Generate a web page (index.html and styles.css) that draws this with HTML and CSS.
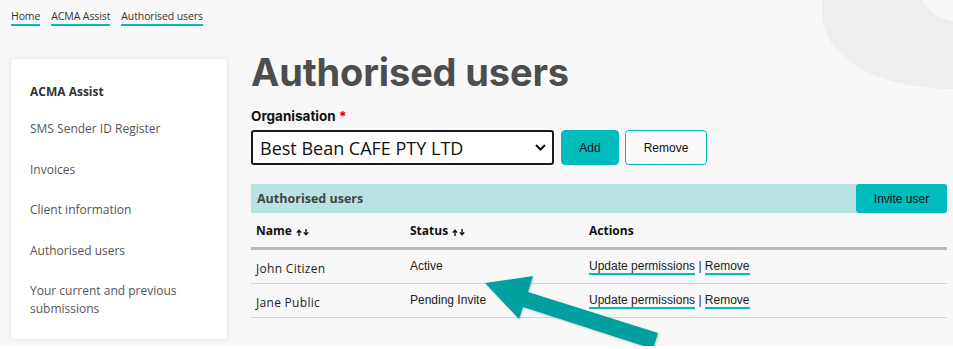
FILE: index.html
```html
<!DOCTYPE html>
<html lang="en">
<head>
<meta charset="utf-8">
<title>Authorised users</title>
<link rel="stylesheet" href="styles.css">
</head>
<body>
<div class="page">
  <svg class="deco" width="131" height="90" viewBox="822 0 131 90" aria-hidden="true">
    <path d="M822,0 L822,12 C822,58 878,89 953,89 L953,0 Z" fill="#eeeeee"/>
    <path d="M922,0 C929,12 940,19 953,21 L953,0 Z" fill="#f8f8f8"/>
  </svg>

  <nav class="crumbs">
    <a href="#">Home</a>
    <a href="#">ACMA Assist</a>
    <a href="#">Authorised users</a>
  </nav>

  <div class="layout">
    <aside class="side">
      <a class="side-title" href="#">ACMA Assist</a>
      <a href="#">SMS Sender ID Register</a>
      <a href="#">Invoices</a>
      <a href="#">Client information</a>
      <a href="#">Authorised users</a>
      <a href="#">Your current and previous submissions</a>
    </aside>

    <main class="main">
      <h1>Authorised users</h1>
      <label class="label">Organisation <span class="req">*</span></label>
      <div class="org-row">
        <div class="select">
          <span>Best Bean CAFE PTY LTD</span>
          <svg width="11" height="7" viewBox="0 0 11 7"><path d="M1 1l4.5 4.5L10 1" fill="none" stroke="#111" stroke-width="2"/></svg>
        </div>
        <button class="btn btn-fill">Add</button>
        <button class="btn btn-line">Remove</button>
      </div>

      <div class="bar">
        <span class="bar-title">Authorised users</span>
        <button class="btn btn-fill btn-invite">Invite user</button>
      </div>

      <table class="users">
        <thead>
          <tr>
            <th class="c-name">Name <svg class="sort" width="13" height="7" viewBox="0 0 13 7"><path d="M3 7V1.5M0.8 3.6L3 1.2L5.2 3.6M10 0V5.5M7.8 3.4L10 5.8L12.2 3.4" fill="none" stroke="#111" stroke-width="1.4"/></svg></th>
            <th class="c-status">Status <svg class="sort" width="13" height="7" viewBox="0 0 13 7"><path d="M3 7V1.5M0.8 3.6L3 1.2L5.2 3.6M10 0V5.5M7.8 3.4L10 5.8L12.2 3.4" fill="none" stroke="#111" stroke-width="1.4"/></svg></th>
            <th class="c-actions">Actions</th>
          </tr>
        </thead>
        <tbody>
          <tr>
            <td class="c-name">John Citizen</td>
            <td class="c-status">Active</td>
            <td class="c-actions"><a href="#">Update permissions</a> | <a href="#">Remove</a></td>
          </tr>
          <tr>
            <td class="c-name">Jane Public</td>
            <td class="c-status">Pending Invite</td>
            <td class="c-actions"><a href="#">Update permissions</a> | <a href="#">Remove</a></td>
          </tr>
        </tbody>
      </table>
    </main>
  </div>

  <svg class="arrow" width="190" height="80" viewBox="480 272 190 80" aria-hidden="true">
    <polygon points="485,283 533,276 528,292 658,333 653,349 523,307 519,319" fill="#00a0a0"/>
  </svg>
</div>
</body>
</html>
```
FILE: styles.css
```css
html { background: #ffffff; }
body {
  margin: 0;
  font-family: "Open Sans", "Noto Sans", sans-serif;
  color: #333;
}
.page {
  position: relative;
  height: 346px;
  background: #f8f8f8;
  overflow: hidden;
}
.deco {
  position: absolute;
  top: 0;
  right: 0;
}
.crumbs {
  display: flex;
  gap: 11px;
  padding: 9px 0 0 11px;
  font-size: 10.5px;
  letter-spacing: -0.1px;
  line-height: 15px;
}
.crumbs a {
  color: #333;
  text-decoration: none;
  border-bottom: 2px solid #00bcbc;
}
.layout {
  display: flex;
  align-items: flex-start;
  gap: 24px;
  margin-top: 22px;
  padding-left: 11px;
  position: relative;
}
.side {
  margin-top: 11px;
  width: 216px;
  box-sizing: border-box;
  background: #fff;
  border-radius: 3px;
  box-shadow: 0 0 4px rgba(0,0,0,0.12);
  padding: 24px 18px 21px 19px;
  display: flex;
  flex-direction: column;
  gap: 22.5px;
  font-size: 12px;
  line-height: 18px;
}
.side a {
  color: #555;
  text-decoration: none;
}
.side .side-title {
  font-weight: 700;
  color: #333;
  margin-bottom: -3.5px;
}
.main {
  width: 696px;
}
h1 {
  margin: 0;
  font-family: "Inter", "Open Sans", sans-serif;
  font-weight: 700;
  font-size: 38px;
  line-height: 48px;
  color: #4d4d4d;
  letter-spacing: -0.15px;
}
.label {
  display: block;
  margin-top: 12px;
  font-family: "Inter", sans-serif;
  font-weight: 700;
  font-size: 13.5px;
  line-height: 17px;
  color: #111;
}
.req { color: #d0021b; }
.org-row {
  display: flex;
  align-items: stretch;
  margin-top: 5px;
  height: 35px;
}
.select {
  width: 303px;
  box-sizing: border-box;
  border: 2px solid #1a1a1a;
  border-radius: 3px;
  background: #fff;
  display: flex;
  align-items: center;
  justify-content: space-between;
  padding: 0 6px 0 7px;
  font-family: "Open Sans", sans-serif;
  font-size: 18px;
  color: #111;
}
.btn {
  font-family: "Liberation Sans", Arial, sans-serif;
  font-size: 12px;
  color: #111;
  border-radius: 4px;
  cursor: pointer;
}
.btn-fill {
  background: #00bcbc;
  border: 1px solid #00bcbc;
}
.org-row .btn-fill {
  width: 58px;
  margin-left: 7px;
}
.btn-line {
  width: 82px;
  margin-left: 6px;
  background: #fafafa;
  border: 1px solid #00bcbc;
}
.bar {
  margin-top: 19px;
  height: 29px;
  background: #b9e2e2;
  display: flex;
  align-items: center;
  justify-content: space-between;
}
.bar-title {
  padding-left: 6px;
  font-weight: 700;
  font-size: 12.5px;
  color: #444;
}
.btn-invite {
  height: 29px;
  width: 91px;
  border-radius: 3px;
}
.users {
  width: 100%;
  border-collapse: collapse;
}
.users th {
  text-align: left;
  font-weight: 700;
  font-size: 12px;
  color: #111;
  height: 34px;
  padding: 0 0 0 5px;
  border-bottom: 3px solid #bbbbbb;
  vertical-align: middle;
}
.sort {
  margin-left: 1px;
  vertical-align: -1px;
}
.users td {
  height: 29px;
  padding: 0 0 0 5px;
  border-bottom: 1px solid #b9e2e2;
  font-size: 12px;
  color: #222;
  vertical-align: middle;
}
.users th.c-name, .users td.c-name { width: 149px; }
.users th.c-status, .users td.c-status { width: 174px; }
.users td.c-name { padding-top: 4px; letter-spacing: 0.3px; }
.users td.c-status, .users td.c-actions {
  font-family: "Liberation Sans", Arial, sans-serif;
  padding-top: 0;
  padding-bottom: 2px;
}
.c-actions a {
  color: #222;
  text-decoration: none;
  border-bottom: 2px solid #00bcbc;
}
.arrow {
  position: absolute;
  left: 480px;
  top: 272px;
  filter: drop-shadow(1px 1px 1px rgba(0,0,0,0.2));
}
```
